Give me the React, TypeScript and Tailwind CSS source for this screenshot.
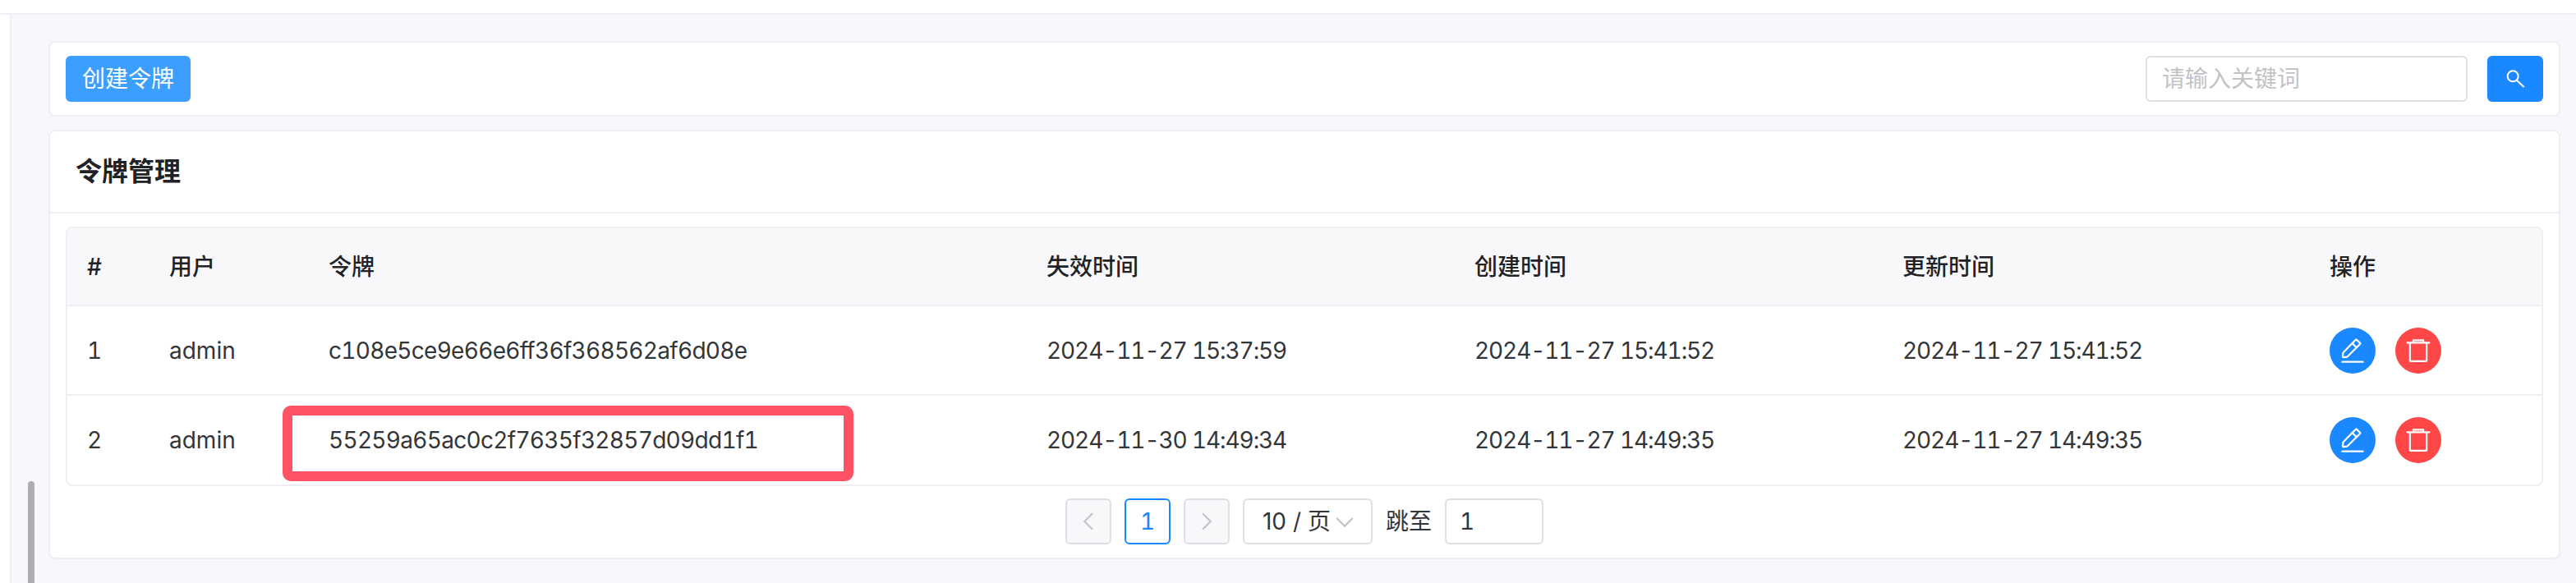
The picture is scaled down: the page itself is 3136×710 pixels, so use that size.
import React from "react";

interface TokenRow {
  id: number;
  user: string;
  token: string;
  expiresAt: string;
  createdAt: string;
  updatedAt: string;
  highlighted?: boolean;
}

const rows: TokenRow[] = [
  {
    id: 1,
    user: "admin",
    token: "c108e5ce9e66e6ff36f368562af6d08e",
    expiresAt: "2024-11-27 15:37:59",
    createdAt: "2024-11-27 15:41:52",
    updatedAt: "2024-11-27 15:41:52",
  },
  {
    id: 2,
    user: "admin",
    token: "55259a65ac0c2f7635f32857d09dd1f1",
    expiresAt: "2024-11-30 14:49:34",
    createdAt: "2024-11-27 14:49:35",
    updatedAt: "2024-11-27 14:49:35",
    highlighted: true,
  },
];

function Icon({ d, className, stroke = 4 }: { d: string; className: string; stroke?: number }) {
  return (
    <svg viewBox="0 0 48 48" fill="none" stroke="currentColor" strokeWidth={stroke} className={className}>
      <path d={d} />
    </svg>
  );
}

const editPath =
  "m30.48 19.038 5.733-5.734a1 1 0 0 0 0-1.414l-5.586-5.586a1 1 0 0 0-1.414 0l-5.734 5.734m7 7L15.763 33.754a1 1 0 0 1-.59.286l-6.048.708a1 1 0 0 1-1.113-1.123l.69-6.033a1 1 0 0 1 .287-.589L23.48 12.038m7 7-7-7M6 42h36";
const deletePath =
  "M5 11h5.5m0 0v29a1 1 0 0 0 1 1h25a1 1 0 0 0 1-1V11m-27 0H16m21.5 0H43m-5.5 0H32m-16 0V7h16v4m-16 0h16";
// circle is smaller and the handle longer than the stock icon
const searchPath = "M31.4 17.6a13 13 0 1 1-26 0 13 13 0 0 1 26 0Zm-4.4 9.2 18.4 17.2";

export default function App() {
  return (
    <div className="relative h-[710px] w-[3136px] overflow-hidden bg-[#f7f7fc] font-['Inter','Noto_Sans_CJK_SC',sans-serif] text-[28px] tabular-nums text-[#333639]">
      <div className="h-[18px] border-b-2 border-[#eeeef4] bg-white" />
      <div className="flex h-[692px]">
        <div className="w-[14px] shrink-0 border-r-2 border-[#eeeef4] bg-white" />
        <main className="flex-1 pl-[45px] pr-[19px] pt-8">
          <div className="flex h-[92px] items-center justify-between rounded-lg border-2 border-[#eeeef4] bg-white pl-[19px] pr-[19px]">
            <button type="button" className="h-14 w-[152px] rounded-md bg-[#3c9fff] text-white">
              创建令牌
            </button>
            <div className="flex gap-6">
              <input
                readOnly
                placeholder="请输入关键词"
                className="h-14 w-[392px] rounded-md border-2 border-[#dedee4] bg-white px-[18px] placeholder:text-[#c2c3c6] focus:outline-none"
              />
              <button type="button" className="flex h-14 w-[68px] items-center justify-center rounded-md bg-[#1a88fe] text-white">
                <Icon d={searchPath} className="h-6 w-6" />
              </button>
            </div>
          </div>

          <div className="mt-4 h-[523px] rounded-lg border-2 border-[#eeeef4] bg-white">
            <h1 className="flex h-[100px] items-center border-b-2 border-[#eeeef4] px-[31px] text-[32px] font-semibold text-[#1f2226]">
              令牌管理
            </h1>
            <div className="px-[19px] pt-4">
              <div className="overflow-hidden rounded-lg border-2 border-[#eeeef4]">
                <table className="w-full table-fixed border-collapse text-left">
                  <colgroup>
                    <col className="w-[100px]" />
                    <col className="w-[194px]" />
                    <col className="w-[874px]" />
                    <col className="w-[521px]" />
                    <col className="w-[521px]" />
                    <col className="w-[520px]" />
                    <col />
                  </colgroup>
                  <thead>
                    <tr className="h-[94px] border-b-2 border-[#eeeef4] bg-[#f8f8fb] text-[#1f2226]">
                      {["#", "用户", "令牌", "失效时间", "创建时间", "更新时间", "操作"].map((title) => (
                        <th key={title} className="px-6 font-medium">
                          {title}
                        </th>
                      ))}
                    </tr>
                  </thead>
                  <tbody>
                    {rows.map((row) => (
                      <tr key={row.id} className="h-[109px] border-b-2 border-[#eeeef4] last:border-b-0">
                        <td className="px-6">{row.id}</td>
                        <td className="px-6">{row.user}</td>
                        <td className="px-6 tracking-[-0.7px]">{row.token}</td>
                        <td className="px-6 tracking-[-1.1px]">{row.expiresAt}</td>
                        <td className="px-6 tracking-[-1.1px]">{row.createdAt}</td>
                        <td className="px-6 tracking-[-1.1px]">{row.updatedAt}</td>
                        <td className="px-6">
                          <div className="flex gap-6">
                            <button type="button" className="flex h-14 w-14 items-center justify-center rounded-full bg-[#1a88fe] text-white">
                              <Icon d={editPath} className="h-9 w-9" stroke={3} />
                            </button>
                            <button type="button" className="flex h-14 w-14 items-center justify-center rounded-full bg-[#ff4747] text-white">
                              <Icon d={deletePath} className="h-9 w-9" stroke={3} />
                            </button>
                          </div>
                        </td>
                      </tr>
                    ))}
                  </tbody>
                </table>
              </div>
              <nav className="mt-[15px] flex items-center justify-center gap-4">
                <span className="flex h-14 w-14 items-center justify-center rounded-md border-2 border-[#dedee4] bg-[#f8f8fb] text-[#c2c3c6]">
                  <Icon d="M32 8.4 16.444 23.956 32 39.513" className="h-[30px] w-[30px]" stroke={3.4} />
                </span>
                <span className="flex h-14 w-14 items-center justify-center rounded-md border-2 border-[#1a88fe] text-[#1a88fe]">1</span>
                <span className="flex h-14 w-14 items-center justify-center rounded-md border-2 border-[#dedee4] bg-[#f8f8fb] text-[#c2c3c6]">
                  <Icon d="m16 39.513 15.556-15.557L16 8.4" className="h-[30px] w-[30px]" stroke={3.4} />
                </span>
                <span className="flex h-14 w-[158px] items-center justify-between whitespace-nowrap rounded-md border-2 border-[#dedee4] pl-[22px] pr-[17px] normal-nums">
                  10 / 页
                  <Icon d="M39.6 17.443 24.043 33 8.487 17.443" className="h-[30px] w-[30px] text-[#c2c3c6]" stroke={3.4} />
                </span>
                <span>跳至</span>
                <span className="flex h-14 w-[120px] items-center rounded-md border-2 border-[#dedee4] px-4">1</span>
              </nav>
            </div>
          </div>
        </main>
      </div>

      {/* annotation drawn over the second row */}
      <div className="absolute left-[344px] top-[494px] h-[92px] w-[695px] rounded-[10px] border-[12px] border-[#ff5365]" />
      <div className="absolute left-[34px] top-[586px] h-[140px] w-2 rounded-full bg-[#aeaeb2]" />
    </div>
  );
}
